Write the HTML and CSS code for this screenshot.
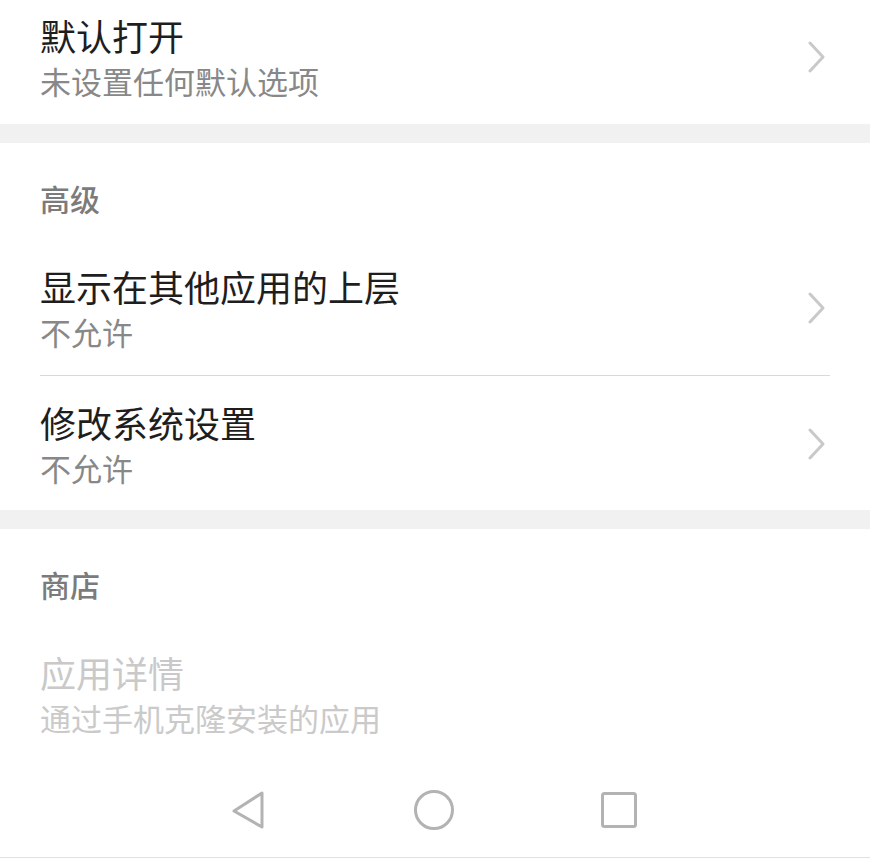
FILE: index.html
```html
<!DOCTYPE html>
<html lang="zh-CN">
<head>
<meta charset="utf-8">
<title>应用信息</title>
<link rel="stylesheet" href="styles.css">
</head>
<body>
<div class="screen">
  <div class="content">
    <section class="group first">
      <div class="row">
        <div class="texts">
          <div class="title">默认打开</div>
          <div class="sub">未设置任何默认选项</div>
        </div>
        <svg class="chev" viewBox="0 0 20 32" width="20" height="32"><path d="M3 2 L16 16 L3 30" fill="none" stroke="#c9c9c9" stroke-width="3" stroke-linecap="round" stroke-linejoin="round"/></svg>
      </div>
    </section>
    <div class="band"></div>
    <section class="group">
      <div class="header">高级</div>
      <div class="row">
        <div class="texts">
          <div class="title">显示在其他应用的上层</div>
          <div class="sub">不允许</div>
        </div>
        <svg class="chev" viewBox="0 0 20 32" width="20" height="32"><path d="M3 2 L16 16 L3 30" fill="none" stroke="#c9c9c9" stroke-width="3" stroke-linecap="round" stroke-linejoin="round"/></svg>
      </div>
      <div class="divider"></div>
      <div class="row last">
        <div class="texts">
          <div class="title">修改系统设置</div>
          <div class="sub">不允许</div>
        </div>
        <svg class="chev" viewBox="0 0 20 32" width="20" height="32"><path d="M3 2 L16 16 L3 30" fill="none" stroke="#c9c9c9" stroke-width="3" stroke-linecap="round" stroke-linejoin="round"/></svg>
      </div>
    </section>
    <div class="band"></div>
    <section class="group">
      <div class="header">商店</div>
      <div class="row disabled">
        <div class="texts">
          <div class="title">应用详情</div>
          <div class="sub">通过手机克隆安装的应用</div>
        </div>
      </div>
    </section>
  </div>
  <nav class="navbar">
    <svg class="nav-icon" viewBox="0 0 40 44" width="40" height="44"><path d="M33 5 L33 39 L5 23 Z" fill="none" stroke="#b3b3b3" stroke-width="3" stroke-linejoin="round"/></svg>
    <svg class="nav-icon" viewBox="0 0 44 44" width="44" height="44"><circle cx="22" cy="22" r="18.5" fill="none" stroke="#b3b3b3" stroke-width="3"/></svg>
    <svg class="nav-icon" viewBox="0 0 40 40" width="40" height="40"><rect x="3.5" y="3.5" width="33" height="33" rx="2" fill="none" stroke="#b3b3b3" stroke-width="3"/></svg>
  </nav>
</div>
</body>
</html>
```

FILE: styles.css
```css
html, body {
  margin: 0;
  padding: 0;
  background: #ffffff;
}

body {
  font-family: "Noto Sans CJK SC", "Noto Sans", sans-serif;
  width: 870px;
  height: 858px;
  overflow: hidden;
}

.screen {
  display: flex;
  flex-direction: column;
  height: 858px;
}

.content {
  flex: 1;
  overflow: hidden;
}

.group {
  background: #ffffff;
}

.group.first {
  margin-top: -11px;
}

.band {
  height: 19px;
  background: #f1f1f1;
}

.header {
  padding: 35px 40px 22px;
  font-size: 30px;
  line-height: 40px;
  font-weight: 500;
  color: #7b7b7b;
}

.row {
  display: flex;
  align-items: center;
  justify-content: space-between;
  padding: 22px 40px 21px 40px;
}

.row.last {
  padding-bottom: 20px;
}

.texts {
  display: flex;
  flex-direction: column;
}

.title {
  font-size: 36px;
  line-height: 48px;
  color: #1e1e1e;
}

.sub {
  font-size: 31px;
  line-height: 44px;
  color: #888888;
}

.row.disabled .title {
  color: #c9c9c9;
}

.row.disabled .sub {
  color: #cacaca;
}

.chev {
  display: block;
  margin-right: 3px;
}

.divider {
  height: 1px;
  margin: 0 40px;
  background: #d9d9d9;
}

.navbar {
  height: 97px;
  display: flex;
  align-items: center;
  justify-content: space-between;
  padding: 0 231px 0 229px;
  border-bottom: 1px solid #e1e1e1;
  background: #ffffff;
}

.nav-icon {
  display: block;
  margin-top: 2px;
}
```
